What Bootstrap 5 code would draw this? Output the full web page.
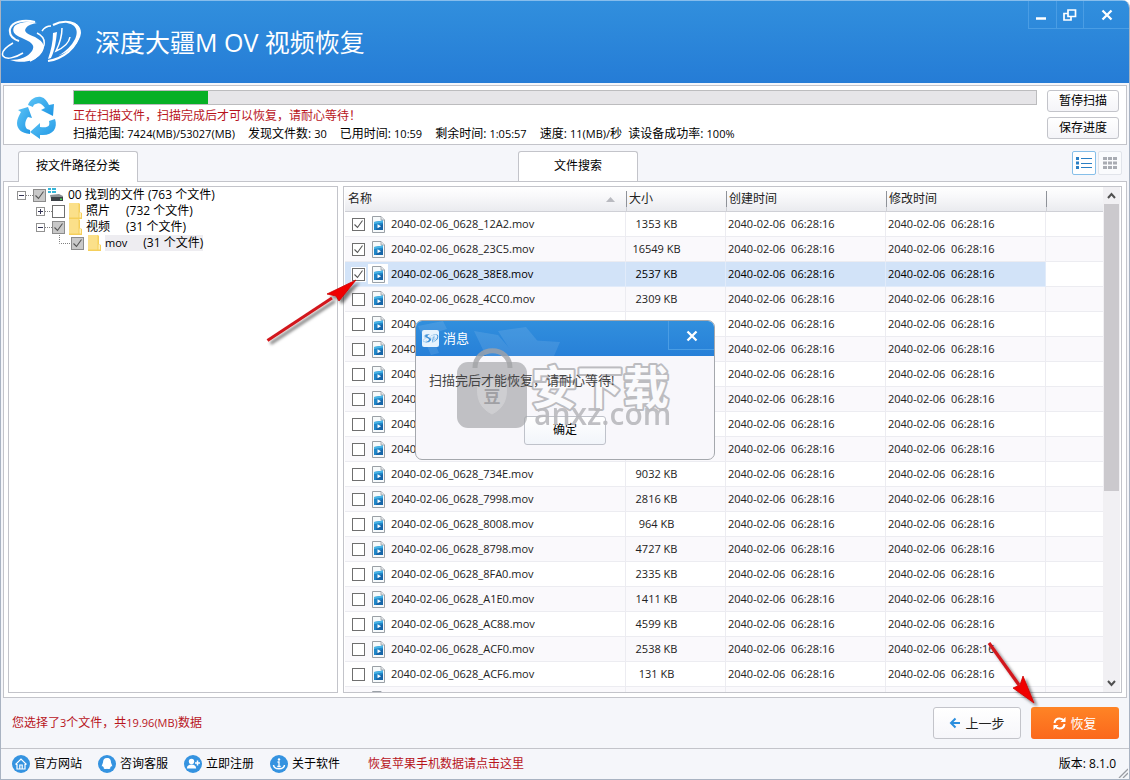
<!DOCTYPE html>
<html lang="zh-CN">
<head>
<meta charset="utf-8">
<meta name="viewport" content="width=device-width, initial-scale=1">
<title>深度大疆MOV视频恢复</title>
<link href="https://cdn.jsdelivr.net/npm/bootstrap@5.3.0/dist/css/bootstrap.min.css" rel="stylesheet">
<script src="https://cdn.jsdelivr.net/npm/bootstrap@5.3.0/dist/js/bootstrap.bundle.min.js"></script>
<style>
  :root { --line: #c3c4ca; --pane: #f5f6fa; --alert: #b8141c; }
  body { font-family: "Open Sans", "Noto Sans CJK SC", sans-serif; font-size: 12px; line-height: 16px; color: #000; background: #fff; }
  .window { height: 100vh; background: var(--pane); border: 1px solid #a9b3c2; border-top: 0; border-radius: 0 8px 0 0; overflow: hidden; }
  .titlebar { height: 83px; background: linear-gradient(#318fdd, #257cd6); border-top: 1px solid #86bdec; color: #fff; }
  .app-title { font-size: 25px; line-height: 36px; font-family: "Open Sans", "Noto Sans CJK SC", sans-serif; font-weight: 400; }
  .brand { gap: 14px; }
  .win-buttons { height: 28px; border: 1px solid #4a9de4; border-top: 0; border-right: 0; }
  .win-buttons button, .dialog-close { background: none; border: 0; color: #fff; padding: 0; width: 27px; }
  .win-buttons button + button { border-left: 1px solid #4a9de4; }
  .win-buttons button:last-child { width: 46px; }
  .boxed { background: #fff; border: 1px solid var(--line); }
  .scan-panel { margin: 2px 2px 0; }
  .scan-icon { width: 69px; padding-right: 4px; }
  .scan-info { padding: 4px 0 2px; }
  .scan-bar { height: 15px; border: 1px solid #bcbcbe; border-radius: 0; background: #e6e5e8; }
  .scan-bar .progress-bar { background: #06b025; }
  .scan-info .alert-line { margin: 3px 0 2px; }
  .stats { gap: 13px; }
  .latin { font-size: 11px; }
  .scan-tools { gap: 5px; padding: 4px 7px 0 10px; }
  .alert-line { color: var(--alert); }
  .tool-btn { width: 72px; height: 22px; padding: 0; font-size: 12px; line-height: 20px; border: 1px solid #c3c4ca; border-radius: 3px; background: linear-gradient(#fff, #f4f4f8); color: #000; }
  .tab-row { height: 36px; padding: 0 7px 0 17px; }
  .path-tab { width: 120px; border: 1px solid var(--line); border-bottom: 0; border-radius: 3px 3px 0 0; background: #fff; font-size: 12px; padding: 0 0 2px; color: #000; height: 30px; }
  .path-tab.current { height: 31px; margin: 0 380px -1px 0; z-index: 1; position: relative; }
  .view-btns { gap: 2px; }
  .view-btn { width: 24px; height: 24px; padding: 0; border: 1px solid #e1e4ea; border-radius: 2px; background: #fafbfd; }
  .view-btn.on { border-color: #86bfe9; background: #fff; }
  .work-area { min-height: 0; gap: 5px; margin: 0 2px; padding: 4px; }
  .tree-pane { width: 330px; }
  .tree-row { height: 16px; }
  .tree ul, .tree { list-style: none; margin: 0; padding: 0; }
  .tree ul { padding-left: 19px; }
  .twig { width: 9px; height: 9px; border: 1px solid #919191; background: #fff; padding: 0; }
  .dots { width: 7px; border-top: 1px dotted #808080; }
  .tree label { white-space: pre; }
  input[type=checkbox].box { appearance: none; width: 13px; height: 13px; border: 1px solid #6f6f6f; margin: 0; background: #fff center/11px no-repeat; border-radius: 0; flex: none; }
  input.box:checked { background-image: url("data:image/svg+xml,%3Csvg xmlns='http://www.w3.org/2000/svg' viewBox='0 0 11 11'%3E%3Cpath d='M1.500 5.500l3 3 5-7' fill='none' stroke='%23555' stroke-width='1.1'/%3E%3C/svg%3E"); }
  .tree input.box:checked { background-color: #c9c9c9; border-color: #8c8c8c; }
  .grid-table { table-layout: fixed; width: 100%; border-collapse: separate; border-spacing: 0; font-size: 11px; color: #222; }
  .grid-table th { height: 25px; padding: 0 3px; font-size: 12px; font-weight: 400; background: linear-gradient(#fff, #f8f8fa 40%, #eaebef); border-bottom: 1px solid #cfd0d6; color: #222; }
  .grid-table th + th { padding-left: 2px; border-image: linear-gradient(transparent 20%, #8f9299 20%, #8f9299 80%, #cfd0d6 80%) 1; border-left: 1px solid; }
  .grid-table td { height: 25px; padding: 0 2px; border-right: 1px solid #ececf1; border-bottom: 1px solid #ececf1; white-space: pre; }
  .grid-table td:last-child { border-right: 0; }
  .grid-table tr:nth-child(even) td { background: #faf9fc; }
  .grid-table tr.picked td:not(:last-child) { background: #d2e3f8; border-color: #e1ebfa; color: #000; }
  .grid-table td.size { text-align: center; padding-right: 40px; }
  .file-name { padding-left: 5px; gap: 3px; }
  .file-name .box { width: 14px; height: 14px; }
  .file-name .glyph { width: 20px; height: 20px; display: flex; align-items: center; justify-content: center; }
  .picked .box { outline: 1px solid #fff; }
  .picked .glyph { background: #fff; }
  .scroll-rail { width: 17px; background: #f1f0f3; }
  .scroll-rail button { height: 17px; border: 0; padding: 0; background: none; }
  .scroll-thumb { width: 15px; height: 61%; background: #cbc9cd; }
  .action-bar { height: 50px; padding: 0 10px 0 11px; }
  .action-btns { gap: 10px; }
  .big-btn { width: 88px; height: 32px; font-size: 13px; line-height: 20px; padding: 0; border-radius: 3px; }
  .back-btn { border: 1px solid #c3c4ca; background: linear-gradient(#fff, #f6f6fa); color: #222; }
  .go-btn { border: 0; background: linear-gradient(#ff8425, #fb681c); color: #fff; }
  .foot { height: 31px; border-top: 1px solid var(--line); padding: 0 13px 0 11px; }
  .foot a { color: #000; text-decoration: none; }
  .foot a.alert-line { color: var(--alert); }
  .foot-links { gap: 16px; }
  .grip { position: absolute; right: 1px; bottom: 1px; }
  .layer { position: absolute; inset: 0; pointer-events: none; }
  .dialog { position: relative; width: 300px; border: 1px solid #a5a8ad; border-radius: 7px; background: #f8f7fb; overflow: hidden; pointer-events: auto; }
  .dialog-head { height: 35px; background: linear-gradient(#318fdd, #2780d8); color: #fff; font-size: 13px; padding-left: 6px; }
  .dialog-close { width: 46px; height: 29px; border-left: 1px solid #4a9de4; border-bottom: 1px solid #4a9de4; }
  .logo-chip { background: #e6f3fd; border-radius: 2px; }
  .dialog-text { position: relative; z-index: 1; font-size: 13px; padding: 16px 13px 0; color: #444; }
  .ok-btn { width: 82px; height: 29px; font-size: 12px; padding: 0; border: 1px solid #bfc2ca; border-radius: 3px; background: linear-gradient(#fff, #f2f5fa); color: #000; margin: 28px 0 14px; }
  .watermark { position: absolute; left: 0; top: 0; pointer-events: none; }
  .pointer-a { position: absolute; left: 258px; top: 92px; }
  .pointer-b { position: absolute; right: 83px; bottom: -15px; z-index: 3; }
</style>
</head>
<body>
<svg width="0" height="0" class="position-absolute">
  <defs>
    <symbol id="sd" viewBox="0 0 80 46">
      <path d="M36 4C28 2 16 3 13 8c-3 6 3 9 10 12 9 4 11 7 8 12-4 6-12 9-22 9 13 4 24 1 30-5 7-8 4-13-5-18-7-3-12-5-9-9 2-3 6-4 11-5z" fill="currentColor"/>
      <path d="M34 3C22 0 11 3 9 10c-1 6 3 10 9 12" fill="none" stroke="currentColor" stroke-width="2"/>
      <path d="M12 24C5 28 0 33 2 37c3 4 12 2 20-3M36 14c6 3 8 7 7 12-2 7-7 13-14 16M50 7c-4 0-7 2-9 5" fill="none" stroke="currentColor" stroke-width="1.500"/>
      <path d="M52 14l4-1c-1 9-2 18-6 26l-3 1c3-9 5-17 5-26z" fill="currentColor"/>
      <path d="M52 6C62 1 79 1 78 14c-1 15-17 26-31 28" fill="none" stroke="currentColor" stroke-width="2"/>
      <path d="M66 4c12 2 12 12 5 21-5 6-10 10-15 12 14-4 23-14 24-23 0-8-6-11-14-10z" fill="currentColor"/>
      <path d="M61 9c0 9-2 15-6 23 7-3 13-8 14-14" fill="none" stroke="currentColor" stroke-width="1.500"/>
    </symbol>
    <symbol id="movie" viewBox="0 0 13 17">
      <path d="M.5.5h8.500l3.500 3.500v12.500H.5z" fill="#f7fafb" stroke="#9aa0a6"/><path d="M9 .5V4h3.500" fill="#e4e8ea" stroke="#9aa0a6" stroke-width=".8"/>
      <path d="M2 6l9-1.500V14H2z" fill="#1f86c8"/><path d="M2 6l9-1.500v2L2 8z" fill="#48b4e6"/><path d="M5 11l6-3v6H4z" fill="#1565a8"/><path d="M5.500 8.200l3.500 2-3.500 2z" fill="#fff"/>
    </symbol>
    <symbol id="folder" viewBox="0 0 13 16"><path d="M0 0h10l1 1v8l2 1v6H0z" fill="#f5cf5b"/><path d="M0 0h9.500v14.500H0z" fill="#fbe08a"/><path d="M10.500 9.500h1.500v5h-1.500z" fill="#fff0b8"/></symbol>
    <symbol id="cross" viewBox="0 0 12 12"><path d="M1.500 1.500l9 9m0-9l-9 9" stroke="#fff" stroke-width="2.300"/></symbol>
    <linearGradient id="arrowblue" x1="0" y1="0" x2="1" y2="1"><stop offset="0" stop-color="#5cc4f6"/><stop offset="1" stop-color="#1e95e4"/></linearGradient>
    <filter id="soft" x="-20%" y="-20%" width="150%" height="150%"><feDropShadow dx="3" dy="3" stdDeviation="1.500" flood-color="#000" flood-opacity=".5"/></filter>
  </defs>
</svg>
<div class="window d-flex flex-column position-relative">
  <header class="titlebar d-flex justify-content-between flex-shrink-0">
    <div class="brand d-flex align-items-center">
      <svg width="80" height="46"><use href="#sd"/></svg>
      <h1 class="app-title mb-0 text-nowrap">深度大疆M OV 视频恢复</h1>
    </div>
    <div class="win-buttons d-flex">
      <button type="button" aria-label="最小化"><svg width="10" height="12" class="me-1"><path d="M0 9.500h10" stroke="#fff" stroke-width="2.500"/></svg></button>
      <button type="button" aria-label="还原"><svg width="14" height="12"><g fill="none" stroke="#fff" stroke-width="1.700"><path d="M5 1h7.500v6.500H5z"/><path d="M5 4.500H1V11h7V7.500"/></g></svg></button>
      <button type="button" aria-label="关闭"><svg width="12" height="12"><use href="#cross"/></svg></button>
    </div>
  </header>

  <section class="boxed scan-panel d-flex flex-shrink-0">
    <div class="scan-icon d-flex align-items-end justify-content-center">
      <svg width="42" height="48" viewBox="0 0 42 48">
        <g fill="url(#arrowblue)">
          <path d="M12 9C14 3 20 0 25 1c4 1 6 4 8 8l5-1-1 12-12-6 4-2c-3-4-6-6-9-4-2 0-3 2-3 3z"/>
          <path d="M2 14l10-3 4 11-4-1c-4 5-3 10-1 12l3 1v4C5 37 1 33 1 27c0-4 2-7 4-11z"/>
          <path d="M39 23c3 9-2 16-12 16h-3v4l-10-7 10-9v4c9 1 10-1 9-6z"/>
        </g>
      </svg>
    </div>
    <div class="scan-info flex-grow-1">
      <div class="progress scan-bar" role="progressbar" aria-label="扫描进度"><div class="progress-bar" style="width:13.9%"></div></div>
      <div class="alert-line">正在扫描文件，扫描完成后才可以恢复，请耐心等待！</div>
      <div class="stats d-flex text-nowrap">
        <span>扫描范围: <span class="latin">7424(MB)/53027(MB)</span></span><span>发现文件数: <span class="latin">30</span></span><span>已用时间: <span class="latin">10:59</span></span><span>剩余时间: <span class="latin">1:05:57</span></span><span>速度: <span class="latin">11(MB)/</span>秒&nbsp; 读设备成功率: <span class="latin">100%</span></span>
      </div>
    </div>
    <div class="scan-tools d-flex flex-column">
      <button type="button" class="btn tool-btn">暂停扫描</button>
      <button type="button" class="btn tool-btn">保存进度</button>
    </div>
  </section>

  <div class="tab-row d-flex align-items-end flex-shrink-0">
    <button type="button" class="path-tab current">按文件路径分类</button>
    <button type="button" class="path-tab">文件搜索</button>
    <div class="view-btns d-flex ms-auto align-self-center">
      <button type="button" class="view-btn on" aria-label="列表"><svg width="16" height="12" class="d-block mx-auto"><path d="M0 0h3v3H0zM0 4.500h3v3H0zM0 9h3v3H0z" fill="#2a7fc4"/><path d="M5 1.500h11M5 6.500h11M5 10.500h11" stroke="#2a7fc4"/></svg></button>
      <button type="button" class="view-btn" aria-label="缩略图"><svg width="14" height="12" class="d-block mx-auto"><path d="M0 1.500h14M0 6h14M0 10.500h14" stroke="#a9acb3" stroke-width="3" stroke-dasharray="4 1"/></svg></button>
    </div>
  </div>

  <main class="boxed work-area d-flex flex-grow-1 position-relative">
    <div class="boxed tree-pane tree flex-shrink-0 px-2 pt-0">
      <ul class="p-0">
        <li>
          <div class="tree-row d-flex align-items-center"><button type="button" class="twig d-flex" aria-label="折叠"><svg width="7" height="7"><path d="M1 3.500h5" stroke="#335"/></svg></button><span class="dots"></span><input class="box" type="checkbox" id="t0" checked>
            <svg width="18" height="14" viewBox="0 0 18 14"><path d="M2 0h3v2H2zM6 0h4v2H6zM2 3h3v2H2zM6 3h4v2H6z" fill="#35b5d8"/><path d="M4 7l9-1 4 2v3H5z" fill="#8a9095"/><path d="M5 9h12v4H5z" fill="#3c4146"/><path d="M14 10.500h2v1.500h-2z" fill="#50e060"/></svg>
            <label for="t0" class="ps-1">00 找到的文件 (763 个文件)</label></div>
          <ul>
            <li><div class="tree-row d-flex align-items-center"><button type="button" class="twig d-flex" aria-label="展开"><svg width="7" height="7"><path d="M1 3.500h5M3.500 1v5" stroke="#335"/></svg></button><span class="dots"></span><input class="box" type="checkbox" id="t1"><svg width="13" height="16" class="ms-1 me-1"><use href="#folder"/></svg><label for="t1" class="d-flex gap-3"><span>照片</span><span>(732 个文件)</span></label></div></li>
            <li><div class="tree-row d-flex align-items-center"><button type="button" class="twig d-flex" aria-label="折叠"><svg width="7" height="7"><path d="M1 3.500h5" stroke="#335"/></svg></button><span class="dots"></span><input class="box" type="checkbox" id="t2" checked><svg width="13" height="16" class="ms-1 me-1"><use href="#folder"/></svg><label for="t2" class="d-flex gap-3"><span>视频</span><span>(31 个文件)</span></label></div>
              <ul><li><div class="tree-row d-flex align-items-center"><svg width="16" height="16"><path d="M4.500 0v8.500H16" fill="none" stroke="#808080" stroke-dasharray="1 1"/></svg><input class="box" type="checkbox" id="t3" checked><svg width="13" height="16" class="ms-1 me-1"><use href="#folder"/></svg><label for="t3" class="d-flex gap-3" style="background:#eeedf1"><span class="latin">mov</span><span>(31 个文件)</span></label></div></li></ul>
            </li>
          </ul>
        </li>
      </ul>
    </div>
    <div class="boxed d-flex flex-grow-1 overflow-hidden" style="padding:0 1px">
      <div class="flex-grow-1 overflow-hidden">
        <table class="grid-table">
          <colgroup><col style="width:281px"><col style="width:100px"><col style="width:160px"><col style="width:160px"><col></colgroup>
          <thead><tr><th><div class="d-flex justify-content-between align-items-center pe-2">名称<svg width="9" height="5"><path d="M0 5L4.500 0 9 5z" fill="#b9bac0"/></svg></div></th><th>大小</th><th>创建时间</th><th>修改时间</th><th></th></tr></thead>
          <tbody id="rows"></tbody>
        </table>
      </div>
      <div class="scroll-rail d-flex flex-column align-items-center flex-shrink-0">
        <button type="button" aria-label="向上"><svg width="9" height="7" class="d-block"><path d="M1 6l3.500-4L8 6" fill="none" stroke="#505050" stroke-width="2"/></svg></button>
        <div class="flex-grow-1 w-100 d-flex justify-content-center"><div class="scroll-thumb"></div></div>
        <button type="button" aria-label="向下"><svg width="9" height="7" class="d-block"><path d="M1 1l3.500 4L8 1" fill="none" stroke="#505050" stroke-width="2"/></svg></button>
      </div>
    </div>
    <svg class="pointer-a" width="100" height="74" filter="url(#soft)"><path d="M5.500 66.500L70 24" stroke="#d2181c" stroke-width="3.200"/><path d="M94 6L77 27l-3-5-9-2z" fill="#f00606" stroke="#c00" stroke-width=".8"/></svg>
    <svg class="pointer-b" width="60" height="76" filter="url(#soft)"><path d="M6 7l30 42" stroke="#d2181c" stroke-width="3.200"/><path d="M51 67L30 52l7-3 3-9z" fill="#f00606" stroke="#c00" stroke-width=".8"/></svg>
  </main>

  <div class="action-bar d-flex align-items-center justify-content-between flex-shrink-0">
    <span class="alert-line">您选择了<span class="latin">3</span>个文件，共<span class="latin">19.96(MB)</span>数据</span>
    <div class="action-btns d-flex">
      <button type="button" class="btn big-btn back-btn d-flex align-items-center justify-content-center gap-1"><svg width="12" height="12"><path d="M11 6H2M6.500 1.500L2 6l4.500 4.500" fill="none" stroke="#2b8ede" stroke-width="2"/></svg>上一步</button>
      <button type="button" class="btn big-btn go-btn d-flex align-items-center justify-content-center gap-1"><svg width="13" height="13"><g fill="none" stroke="#fff" stroke-width="2"><path d="M1.500 6C2 3 4 1.500 6.500 1.500c2 0 3.500 1 4.500 2.500"/><path d="M11.500 7c-.5 3-2.500 4.500-5 4.500C4.500 11.500 3 10.500 2 9"/></g><path d="M12.500 0v5h-5zM.5 13V8h5z" fill="#fff"/></svg>恢复</button>
    </div>
  </div>

  <footer class="foot d-flex align-items-center justify-content-between flex-shrink-0 text-nowrap">
    <div class="d-flex align-items-center foot-links">
      <a href="#" class="d-flex align-items-center gap-1"><svg width="18" height="18"><circle cx="9" cy="9" r="9" fill="#3593e0"/><path d="M3.500 9.500L9 4l5.500 5.500M5 9v5h8V9M7.800 14v-4h2.400v4" fill="none" stroke="#fff" stroke-width="1.200"/></svg>官方网站</a>
      <a href="#" class="d-flex align-items-center gap-1"><svg width="18" height="18"><circle cx="9" cy="9" r="9" fill="#3593e0"/><path d="M9 3c3 0 4 2 4 4.500l1.200 3.200c.2 1-.6 1-1.100.4-.2.700-.5 1.200-1 1.700 1 1.200-2 1.500-3.100.9-1.100.6-4.100.3-3.100-.9-.5-.5-.8-1-1-1.700-.5.6-1.300.6-1.100-.4L5 7.500C5 5 6 3 9 3z" fill="#fff"/></svg>咨询客服</a>
      <a href="#" class="d-flex align-items-center gap-1"><svg width="18" height="18"><circle cx="9" cy="9" r="9" fill="#3593e0"/><circle cx="7.500" cy="6.500" r="2.700" fill="#fff"/><path d="M2.800 13.500c.3-3 2-4 4.700-4s4.400 1 4.700 4z" fill="#fff"/><path d="M11 8h5M13.500 5.500v5" stroke="#fff" stroke-width="1.500"/></svg>立即注册</a>
      <a href="#" class="d-flex align-items-center gap-1"><svg width="18" height="18"><circle cx="9" cy="9" r="9" fill="#3593e0"/><circle cx="9" cy="4.500" r="1.200" fill="#fff"/><path d="M7.500 7H9v4.500M7.300 11.500h3.400" fill="none" stroke="#fff" stroke-width="1.300"/><path d="M3.500 10c.5 5 10.500 5 11 0" fill="none" stroke="#fff" stroke-width="1.500"/></svg>关于软件</a>
      <a href="#" class="alert-line ms-2 ps-1">恢复苹果手机数据请点击这里</a>
    </div>
    <span>版本: 8.1.0</span>
    <svg class="grip" width="10" height="10"><path d="M1 10l9-9M5 10l5-5" stroke="#9a9da3" stroke-width="1.300"/></svg>
  </footer>

  <div class="layer d-flex align-items-center justify-content-center">
    <div class="dialog" role="dialog" aria-label="消息">
      <div class="dialog-head d-flex justify-content-between align-items-start">
        <span class="d-flex align-items-center h-100 gap-1"><svg class="logo-chip" width="17" height="17" viewBox="-3 -17 86 80" color="#2a86d4"><use href="#sd" width="80" height="46"/></svg>消息</span>
        <button type="button" class="dialog-close" aria-label="关闭"><svg width="12" height="12"><use href="#cross"/></svg></button>
      </div>
      <div class="dialog-text">扫描完后才能恢复，请耐心等待!</div>
      <div class="text-center"><button type="button" class="btn ok-btn">确定</button></div>
      <svg class="watermark" width="298" height="139">
        <g fill="#fff" opacity=".1"><path d="M2 5l25-5 4 8-16 5 8 19-8 2z"/><path d="M58 10l24 4 18 21H70z"/><path d="M82 10l28-4 24 29H98z"/><path d="M112 19l32 2-6 14h-14z"/></g>
        <path d="M59 47C59 24 94 24 94 47" fill="none" stroke="#a2a3a6" stroke-width="5" opacity=".8"/>
        <rect x="41" y="41" width="70" height="66" rx="11" fill="#a2a3a6" opacity=".65"/>
        <path d="M76 58c5 4 9 5 14 5 2 14-2 24-14 30-12-6-16-16-14-30 5 0 9-1 14-5z" fill="#fff" opacity=".22" stroke="#fff"/>
        <text x="76" y="82" text-anchor="middle" font-size="17" font-weight="700" fill="#a0a0a4">豆</text>
        <text x="115" y="83" font-size="46" font-weight="700" font-family="Noto Sans CJK SC" fill="#fafafc" stroke="#bcbcc0" stroke-width="4" stroke-linejoin="round" paint-order="stroke">安下载</text>
        <text x="118" y="104" font-size="30" font-weight="600" fill="#b9b9bd" opacity=".9">anxz.com</text>
      </svg>
    </div>
  </div>
</div>
<script>
  const files = [
    ["2040-02-06_0628_12A2.mov", "1353 KB", 1], ["2040-02-06_0628_23C5.mov", "16549 KB", 1], ["2040-02-06_0628_38E8.mov", "2537 KB", 2],
    ["2040-02-06_0628_4CC0.mov", "2309 KB"], ["2040", ""], ["2040", ""], ["2040", ""], ["2040", ""], ["2040", ""], ["2040", ""],
    ["2040-02-06_0628_734E.mov", "9032 KB"], ["2040-02-06_0628_7998.mov", "2816 KB"], ["2040-02-06_0628_8008.mov", "964 KB"],
    ["2040-02-06_0628_8798.mov", "4727 KB"], ["2040-02-06_0628_8FA0.mov", "2335 KB"], ["2040-02-06_0628_A1E0.mov", "1411 KB"],
    ["2040-02-06_0628_AC88.mov", "4599 KB"], ["2040-02-06_0628_ACF0.mov", "2538 KB"], ["2040-02-06_0628_ACF6.mov", "131 KB"], ["", ""]
  ];
  document.getElementById("rows").innerHTML = files.map(([name, size, state], i) => {
    const when = name ? "2040-02-06  06:28:16" : "";
    return `<tr class="${state === 2 ? "picked" : ""}"><td><div class="file-name d-flex align-items-center"><input class="box" type="checkbox" id="f${i}" aria-label="选择" ${state ? "checked" : ""}><span class="glyph"><svg width="13" height="17"><use href="#movie"/></svg></span><label for="f${i}">${name}</label></div></td><td class="size">${size}</td><td>${when}</td><td>${when}</td><td></td></tr>`;
  }).join("");
</script>
</body>
</html>
